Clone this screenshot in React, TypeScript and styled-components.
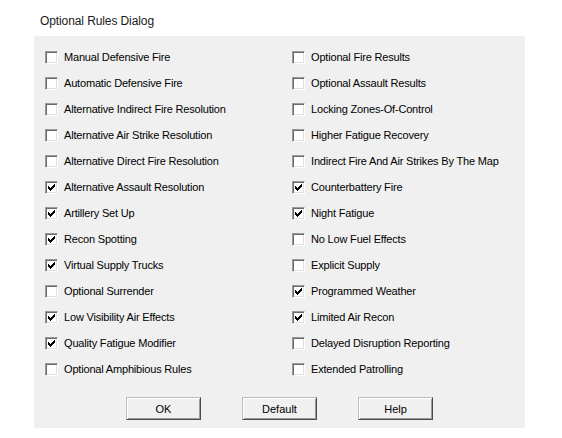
import React from "react";
import styled, { createGlobalStyle } from "styled-components";

const Global = createGlobalStyle`
  html, body { margin: 0; padding: 0; background: #ffffff; }
  body { font-family: "Liberation Sans", Arial, sans-serif; }
`;

const Page = styled.div`
  width: 562px;
  height: 438px;
  background: #ffffff;
  padding: 13px 0 0 34px;
  box-sizing: border-box;
`;

const Title = styled.div`
  font-size: 12px;
  color: #1a1a1a;
  padding-left: 6px;
  height: 23px;
  line-height: 16px;
  letter-spacing: -0.1px;
`;

const Panel = styled.div`
  width: 491px;
  height: 392px;
  background: #f0f0f0;
  box-sizing: border-box;
  padding: 8px 0 0 11px;
  display: flex;
  flex-direction: column;
`;

const Grid = styled.div`
  display: grid;
  grid-template-columns: 247px 1fr;
  grid-auto-rows: 26px;
`;

const Row = styled.label`
  display: flex;
  align-items: center;
  gap: 6px;
  font-size: 11px;
  letter-spacing: -0.18px;
  color: #000;
  white-space: nowrap;
`;

const Box = styled.span`
  width: 13px;
  height: 13px;
  box-sizing: border-box;
  border: 1px solid;
  border-color: #9a9a9a #ffffff #ffffff #9a9a9a;
  box-shadow: inset 1px 1px 0 #6a6a6a, inset -1px -1px 0 #e0e0e0;
  background: #ffffff;
  display: flex;
  align-items: center;
  justify-content: center;
  flex: none;
`;

const Buttons = styled.div`
  display: flex;
  justify-content: center;
  gap: 41px;
  margin-top: 15px;
  padding-right: 11px;
`;

const Button = styled.button`
  width: 75px;
  height: 23px;
  box-sizing: border-box;
  background: #f0f0f0;
  border: 1px solid;
  border-color: #bdbdbd #4a4a4a #4a4a4a #bdbdbd;
  box-shadow: inset 1px 1px 0 #ffffff, inset -1px -1px 0 #9a9a9a;
  font-family: "Liberation Sans", Arial, sans-serif;
  font-size: 11px;
  color: #000;
  padding: 0;
`;

const Check = () => (
  <svg width="7" height="7" viewBox="0 0 7 7" shapeRendering="crispEdges">
    <path
      d="M0 2h1v3h-1zM1 3h1v3h-1zM2 4h1v3h-1zM3 3h1v3h-1zM4 2h1v3h-1zM5 1h1v3h-1zM6 0h1v3h-1z"
      fill="#000"
    />
  </svg>
);

type Rule = { label: string; checked: boolean };

const left: Rule[] = [
  { label: "Manual Defensive Fire", checked: false },
  { label: "Automatic Defensive Fire", checked: false },
  { label: "Alternative Indirect Fire Resolution", checked: false },
  { label: "Alternative Air Strike Resolution", checked: false },
  { label: "Alternative Direct Fire Resolution", checked: false },
  { label: "Alternative Assault Resolution", checked: true },
  { label: "Artillery Set Up", checked: true },
  { label: "Recon Spotting", checked: true },
  { label: "Virtual Supply Trucks", checked: true },
  { label: "Optional Surrender", checked: false },
  { label: "Low Visibility Air Effects", checked: true },
  { label: "Quality Fatigue Modifier", checked: true },
  { label: "Optional Amphibious Rules", checked: false },
];

const right: Rule[] = [
  { label: "Optional Fire Results", checked: false },
  { label: "Optional Assault Results", checked: false },
  { label: "Locking Zones-Of-Control", checked: false },
  { label: "Higher Fatigue Recovery", checked: false },
  { label: "Indirect Fire And Air Strikes By The Map", checked: false },
  { label: "Counterbattery Fire", checked: true },
  { label: "Night Fatigue", checked: true },
  { label: "No Low Fuel Effects", checked: false },
  { label: "Explicit Supply", checked: false },
  { label: "Programmed Weather", checked: true },
  { label: "Limited Air Recon", checked: true },
  { label: "Delayed Disruption Reporting", checked: false },
  { label: "Extended Patrolling", checked: false },
];

const RuleRow = ({ rule }: { rule: Rule }) => (
  <Row>
    <Box>{rule.checked && <Check />}</Box>
    <span>{rule.label}</span>
  </Row>
);

export default function App() {
  const rows = left.flatMap((l, i) => [l, right[i]]);
  return (
    <Page>
      <Global />
      <Title>Optional Rules Dialog</Title>
      <Panel>
        <Grid>
          {rows.map((r, i) => (
            <RuleRow key={i} rule={r} />
          ))}
        </Grid>
        <Buttons>
          <Button>OK</Button>
          <Button>Default</Button>
          <Button>Help</Button>
        </Buttons>
      </Panel>
    </Page>
  );
}
